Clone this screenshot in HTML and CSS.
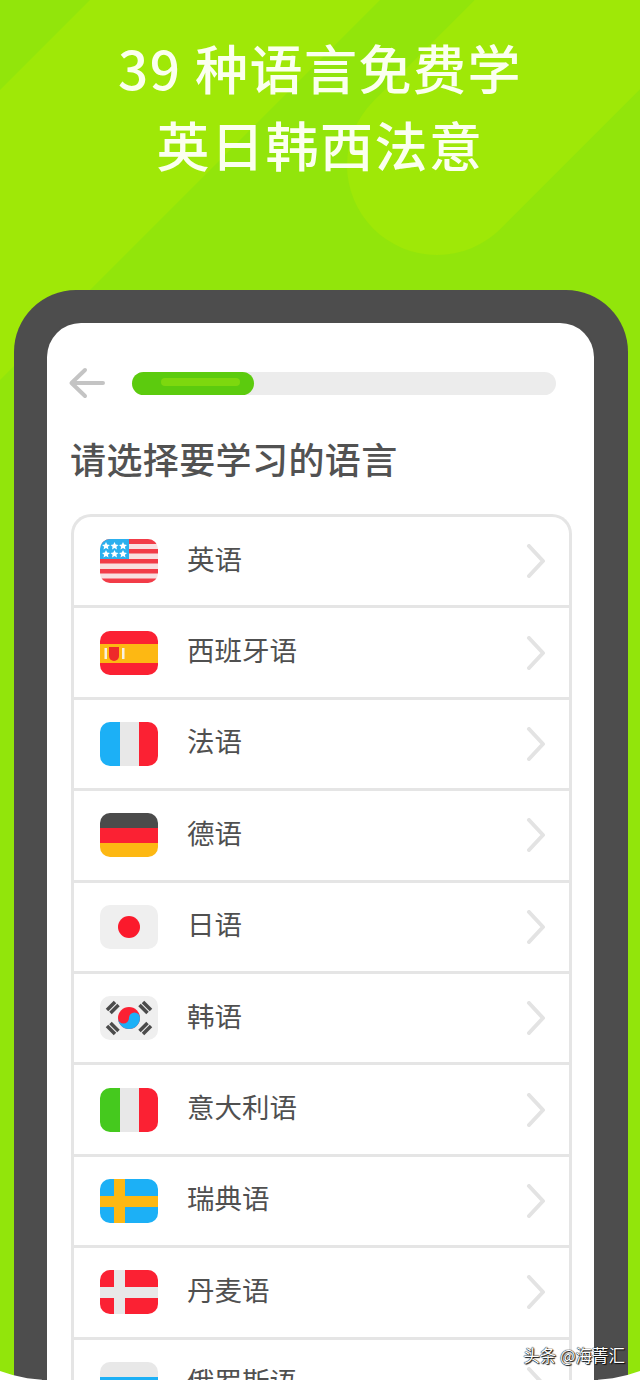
FILE: index.html
```html
<!DOCTYPE html>
<html lang="zh-CN">
<head>
  <meta charset="utf-8">
  <title>39 种语言免费学</title>
  <link rel="stylesheet" href="styles.css">
</head>
<body>
  <!-- Background shapes -->
  <svg class="backdrop" width="640" height="1380" viewBox="0 0 640 1380">
    <polygon class="shade" points="0,0 90,0 0,90"/>
    <polygon class="shade" points="380,0 640,0 640,1380 0,1380 0,380"/>
    <line class="glow" x1="437" y1="165" x2="737" y2="-135"/>
  </svg>

  <!-- Headline -->
  <header class="hero">
    <h1>39 种语言免费学</h1>
    <h1>英日韩西法意</h1>
  </header>

  <!-- Phone mockup -->
  <main class="phone">
    <div class="screen">
      <div class="topbar">
        <svg class="back" width="38" height="34" viewBox="0 0 38 34">
          <path d="M35 17H4M17 4L3.500 17L17 30"/>
        </svg>
        <div class="track">
          <div class="fill"><div class="shine"></div></div>
        </div>
      </div>

      <h2 class="title">请选择要学习的语言</h2>

      <div class="list">
        <div class="row">
          <svg class="flag" viewBox="0 0 58 44">
            <rect width="58" height="44" fill="#f9dfe0"/>
            <rect width="58" height="5" fill="#f23c48"/>
            <rect y="10" width="58" height="4.500" fill="#f23c48"/>
            <rect y="20" width="58" height="4.500" fill="#f23c48"/>
            <rect y="30" width="58" height="4.500" fill="#f23c48"/>
            <rect y="39.500" width="58" height="4.500" fill="#f23c48"/>
            <rect width="29" height="20" fill="#2cb0ee"/>
            <g fill="#fff">
              <polygon points="6,3 7.200,5.600 10,5.900 7.900,7.800 8.500,10.500 6,9.100 3.500,10.500 4.100,7.800 2,5.900 4.800,5.600"/>
              <polygon points="14.500,3 15.700,5.600 18.500,5.900 16.400,7.800 17,10.500 14.500,9.100 12,10.500 12.600,7.800 10.500,5.900 13.300,5.600"/>
              <polygon points="23,3 24.200,5.600 27,5.900 24.900,7.800 25.500,10.500 23,9.100 20.500,10.500 21.100,7.800 19,5.900 21.800,5.600"/>
              <polygon points="6,11 7.200,13.600 10,13.900 7.900,15.800 8.500,18.500 6,17.100 3.500,18.500 4.100,15.800 2,13.900 4.800,13.600"/>
              <polygon points="14.500,11 15.700,13.600 18.500,13.900 16.400,15.800 17,18.500 14.500,17.100 12,18.500 12.600,15.800 10.500,13.900 13.300,13.600"/>
              <polygon points="23,11 24.200,13.600 27,13.900 24.900,15.800 25.500,18.500 23,17.100 20.500,18.500 21.100,15.800 19,13.900 21.800,13.600"/>
            </g>
          </svg>
          <span class="name">英语</span>
          <svg class="chevron" width="20" height="34" viewBox="0 0 20 34"><path d="M3 2L17 17L3 32"/></svg>
        </div>
        <div class="row">
          <svg class="flag" viewBox="0 0 58 44">
            <rect width="58" height="44" fill="#fb2133"/>
            <rect y="13" width="58" height="19" fill="#fdb813"/>
            <rect x="4.500" y="17" width="2.500" height="11" fill="#f9f1e0"/>
            <rect x="22" y="17" width="2.500" height="11" fill="#f9f1e0"/>
            <path d="M9 16H19V25A5 5 0 0 1 9 25Z" fill="#ee2a2a"/>
          </svg>
          <span class="name">西班牙语</span>
          <svg class="chevron" width="20" height="34" viewBox="0 0 20 34"><path d="M3 2L17 17L3 32"/></svg>
        </div>
        <div class="row">
          <svg class="flag" viewBox="0 0 58 44">
            <rect width="20" height="44" fill="#1cb0f6"/>
            <rect x="20" width="19" height="44" fill="#e8e8e8"/>
            <rect x="39" width="19" height="44" fill="#fb2133"/>
          </svg>
          <span class="name">法语</span>
          <svg class="chevron" width="20" height="34" viewBox="0 0 20 34"><path d="M3 2L17 17L3 32"/></svg>
        </div>
        <div class="row">
          <svg class="flag" viewBox="0 0 58 44">
            <rect width="58" height="15" fill="#4b4b4b"/>
            <rect y="15" width="58" height="15" fill="#fb2133"/>
            <rect y="30" width="58" height="14" fill="#fdb813"/>
          </svg>
          <span class="name">德语</span>
          <svg class="chevron" width="20" height="34" viewBox="0 0 20 34"><path d="M3 2L17 17L3 32"/></svg>
        </div>
        <div class="row">
          <svg class="flag" viewBox="0 0 58 44">
            <rect width="58" height="44" fill="#efefef"/>
            <circle cx="29" cy="22" r="11" fill="#fb1a2c"/>
          </svg>
          <span class="name">日语</span>
          <svg class="chevron" width="20" height="34" viewBox="0 0 20 34"><path d="M3 2L17 17L3 32"/></svg>
        </div>
        <div class="row">
          <svg class="flag" viewBox="0 0 58 44">
            <rect width="58" height="44" fill="#efefef"/>
            <circle cx="29" cy="22" r="11" fill="#fb2133"/>
            <path d="M18 22A5.500 5.500 0 0 0 29 22A5.500 5.500 0 0 1 40 22A11 11 0 0 1 18 22Z" fill="#1cb0f6"/>
            <g class="trigram">
              <path d="M7 14L15 6M10.500 17L18.500 9"/>
              <path d="M39.500 9L47.500 17M43 6L51 14"/>
              <path d="M7 30L15 38M10.500 27L18.500 35"/>
              <path d="M39.500 35L47.500 27M43 38L51 30"/>
            </g>
          </svg>
          <span class="name">韩语</span>
          <svg class="chevron" width="20" height="34" viewBox="0 0 20 34"><path d="M3 2L17 17L3 32"/></svg>
        </div>
        <div class="row">
          <svg class="flag" viewBox="0 0 58 44">
            <rect width="20" height="44" fill="#45c91e"/>
            <rect x="20" width="19" height="44" fill="#e8e8e8"/>
            <rect x="39" width="19" height="44" fill="#fb2133"/>
          </svg>
          <span class="name">意大利语</span>
          <svg class="chevron" width="20" height="34" viewBox="0 0 20 34"><path d="M3 2L17 17L3 32"/></svg>
        </div>
        <div class="row">
          <svg class="flag" viewBox="0 0 58 44">
            <rect width="58" height="44" fill="#1cb0f6"/>
            <rect x="14" width="11" height="44" fill="#fdb813"/>
            <rect y="17" width="58" height="11" fill="#fdb813"/>
          </svg>
          <span class="name">瑞典语</span>
          <svg class="chevron" width="20" height="34" viewBox="0 0 20 34"><path d="M3 2L17 17L3 32"/></svg>
        </div>
        <div class="row">
          <svg class="flag" viewBox="0 0 58 44">
            <rect width="58" height="44" fill="#fb2133"/>
            <rect x="14" width="11" height="44" fill="#e8e8e8"/>
            <rect y="17" width="58" height="11" fill="#e8e8e8"/>
          </svg>
          <span class="name">丹麦语</span>
          <svg class="chevron" width="20" height="34" viewBox="0 0 20 34"><path d="M3 2L17 17L3 32"/></svg>
        </div>
        <div class="row">
          <svg class="flag" viewBox="0 0 58 44">
            <rect width="58" height="15" fill="#e8e8e8"/>
            <rect y="15" width="58" height="15" fill="#1cb0f6"/>
            <rect y="30" width="58" height="14" fill="#fb2133"/>
          </svg>
          <span class="name">俄罗斯语</span>
          <svg class="chevron" width="20" height="34" viewBox="0 0 20 34"><path d="M3 2L17 17L3 32"/></svg>
        </div>
      </div>
    </div>
  </main>

  <!-- White curve along the bottom edge -->
  <div class="bottom-curve"></div>

  <!-- Watermark -->
  <div class="watermark">头条 @海菁汇</div>
</body>
</html>
```

FILE: styles.css
```css
html, body {
  margin: 0;
  height: 1380px;
  overflow: hidden;
}
body {
  position: relative;
  background: #9fe807;
  font-family: "Noto Sans CJK SC", "Noto Sans", sans-serif;
}
/* Background shapes */
.backdrop {
  position: absolute;
  top: 0;
  left: 0;
}
.shade {
  fill: #92e50b;
}
.glow {
  stroke: #9fe807;
  stroke-width: 180;
  stroke-linecap: round;
}
/* Headline */
.hero {
  position: relative;
  height: 290px;
  box-sizing: border-box;
  padding-top: 29px;
  text-align: center;
}
.hero h1 {
  margin: 0;
  height: 77px;
  font-size: 53px;
  line-height: 77px;
  font-weight: 500;
  letter-spacing: 1.500px;
  color: #fbffef;
}
/* Phone frame */
.phone {
  position: relative;
  width: 547px;
  height: 1057px;
  margin-left: 14px;
  border: 33px solid #4d4d4d;
  border-right-width: 34px;
  border-bottom: none;
  border-radius: 62px 62px 0 0;
  background: #4d4d4d;
  overflow: hidden;
}
.screen {
  height: 100%;
  padding: 43px 22px 0 24px;
  background: #fff;
  border-radius: 34px 34px 0 0;
}
/* Back arrow and progress bar */
.topbar {
  display: flex;
  align-items: center;
  gap: 26px;
  margin-left: -3px;
}
.back {
  flex: none;
  fill: none;
  stroke: #c4c4c4;
  stroke-width: 4;
  stroke-linecap: round;
  stroke-linejoin: round;
}
.track {
  flex: none;
  width: 424px;
  height: 23px;
  border-radius: 12px;
  background: #ececec;
}
.fill {
  width: 122px;
  height: 23px;
  border-radius: 12px;
  background: #5ccb0e;
  padding: 6px 14px 0 29px;
  box-sizing: border-box;
}
.shine {
  height: 8px;
  border-radius: 4px;
  background: #7dd80e;
}
.title {
  margin: 32px 0 30px -1px;
  font-size: 36px;
  line-height: 52px;
  font-weight: 500;
  letter-spacing: 0.4px;
  color: #525252;
}
/* Language list */
.list {
  border: 3px solid #e5e5e5;
  border-bottom: none;
  border-radius: 20px 20px 0 0;
}
.row {
  display: flex;
  align-items: center;
  height: 88.400px;
  padding: 0 23px 0 26px;
  border-bottom: 3px solid #e5e5e5;
}
.flag {
  flex: none;
  width: 58px;
  height: 44px;
  border-radius: 10px;
}
.name {
  flex: 1;
  margin-left: 29px;
  padding-bottom: 7px;
  font-size: 27.500px;
  color: #505050;
}
.chevron {
  flex: none;
  fill: none;
  stroke: #e3e3e3;
  stroke-width: 4;
  stroke-linecap: round;
  stroke-linejoin: round;
}
.trigram {
  fill: none;
  stroke: #4b4b4b;
  stroke-width: 3.500;
}
/* White curve along the bottom edge */
.bottom-curve {
  position: absolute;
  left: 0;
  right: 0;
  top: 1371px;
  height: 9px;
}
.bottom-curve::before,
.bottom-curve::after {
  content: "";
  position: absolute;
  top: 0;
  width: 42px;
  height: 9px;
  background: #fff;
}
.bottom-curve::before {
  left: 0;
  clip-path: polygon(0 0, 30% 45%, 65% 80%, 100% 96%, 100% 100%, 0 100%);
}
.bottom-curve::after {
  right: 0;
  clip-path: polygon(100% 0, 70% 45%, 35% 80%, 0 96%, 0 100%, 100% 100%);
}
/* Watermark */
.watermark {
  position: absolute;
  right: 15px;
  top: 1343px;
  font-size: 16.500px;
  line-height: 24px;
  color: #fff;
  text-shadow: 0 0 1px #000, 0 0 1px #000, 1px 1px 1px #111;
}
```
